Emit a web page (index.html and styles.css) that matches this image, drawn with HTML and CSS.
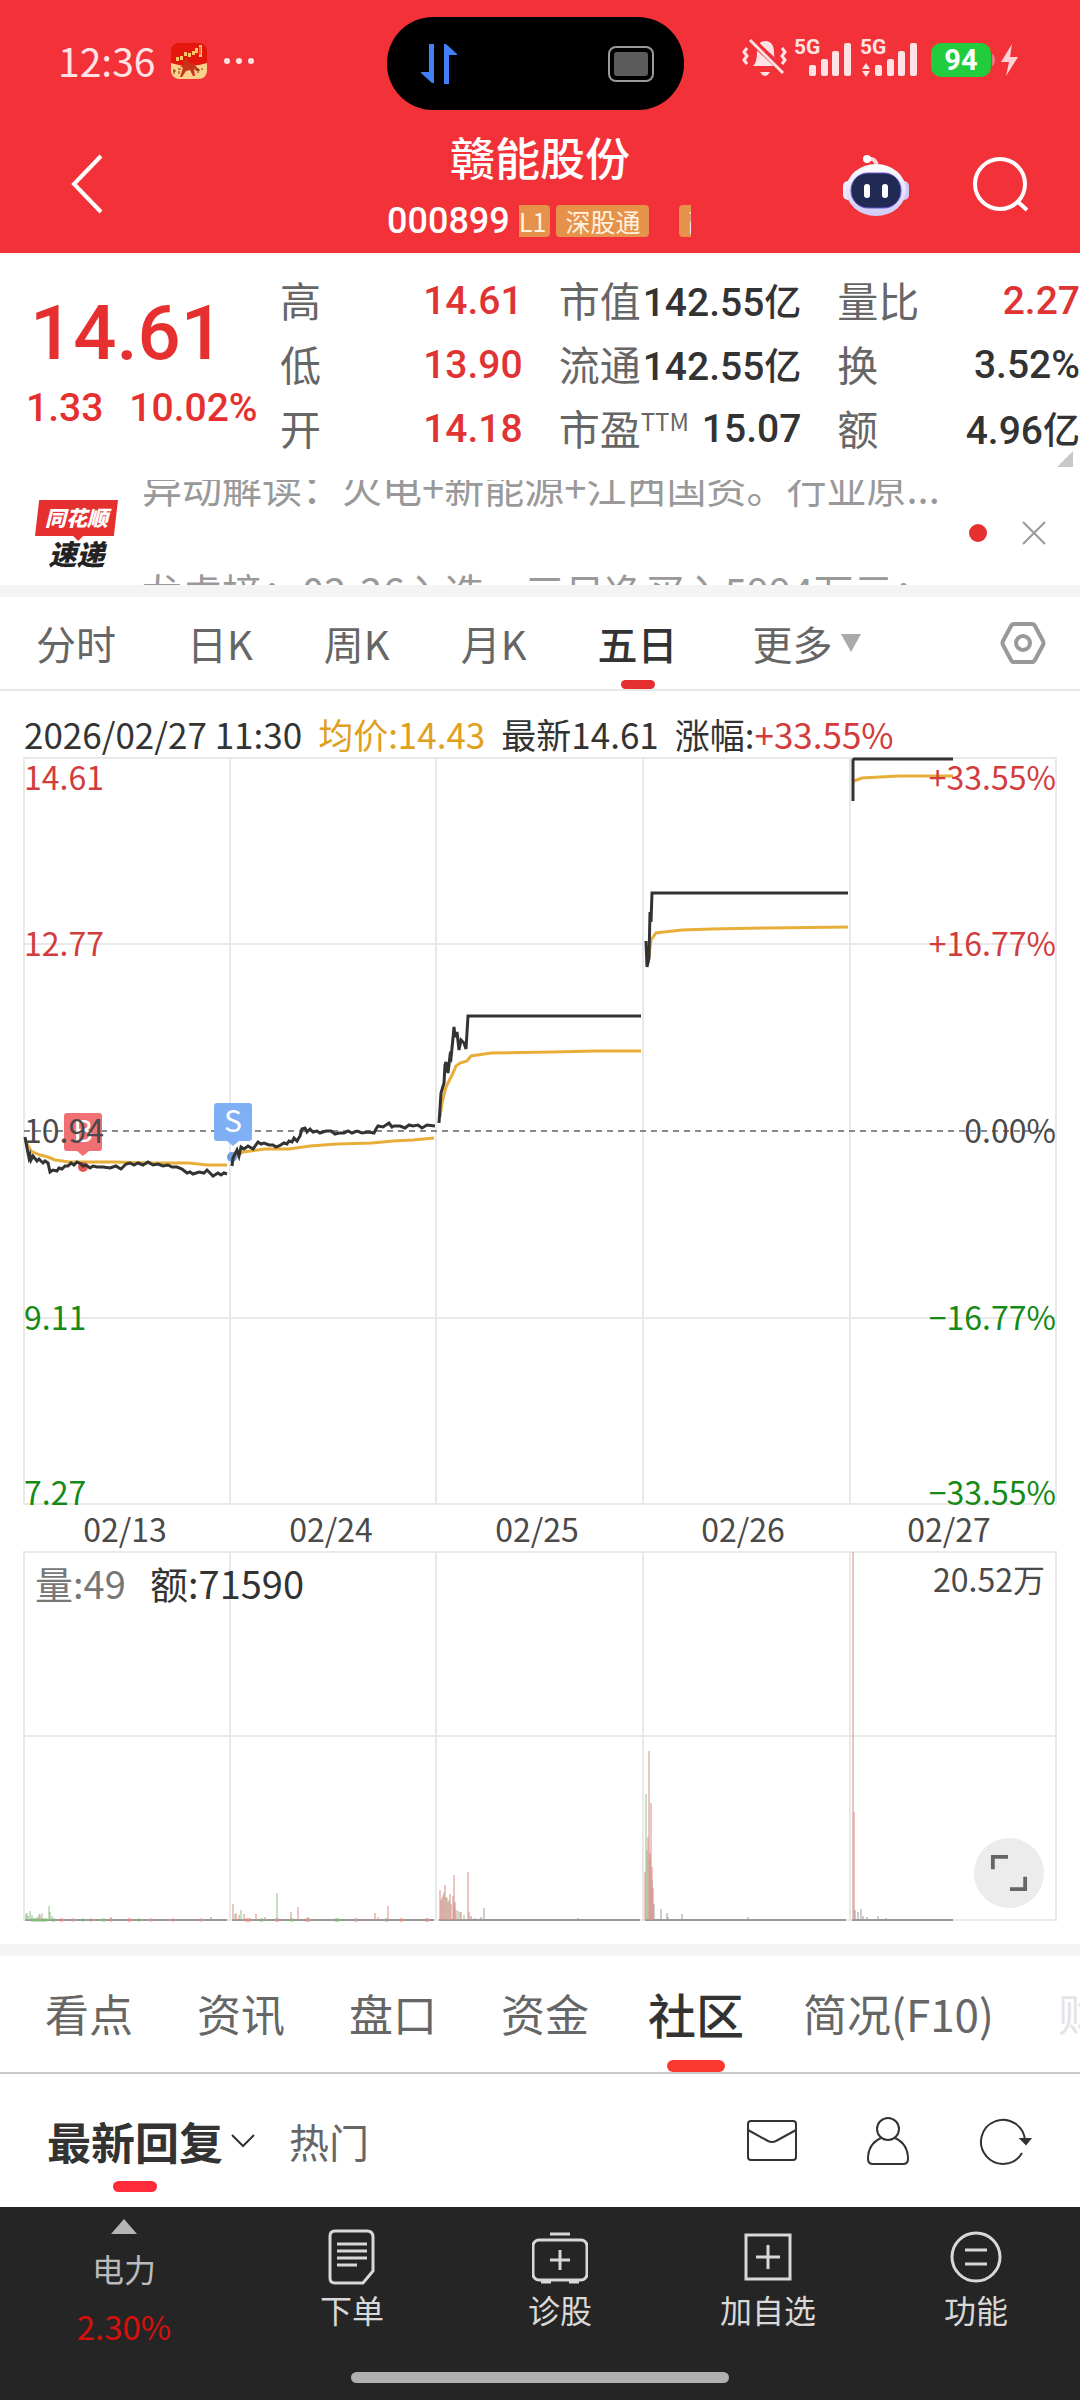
FILE: index.html
```html
<!DOCTYPE html>
<html lang="zh-CN">
<head>
<meta charset="utf-8">
<meta name="viewport" content="width=device-width, initial-scale=1">
<title>赣能股份 000899</title>
<link rel="stylesheet" href="styles.css">
</head>
<body>
<header class="top">
  <div class="status">
    <div class="status-left">
      <span class="clock">12:36</span>
      <svg class="app-icon" viewBox="0 0 36 36" aria-hidden="true">
        <defs><clipPath id="app-clip"><rect width="36" height="36" rx="8"/></clipPath></defs>
        <g clip-path="url(#app-clip)">
          <rect width="36" height="36" fill="#e3170d"/>
          <path d="M0 20Q18 26 36 20V36H0Z" fill="#fbd08a"/>
          <path d="M5 14h3v4H5zM9 13h3v4H9zM13 9h3v4h-3zM17 10h3v4h-3zM21 8h3v4h-3zM24 5h3v5h-3zM28 2h3v12h-3z" fill="#f9c65f"/>
          <path d="M29 4v8" stroke="#e3170d"/>
          <path d="M13 17l3-2 2 5 6 2 4 5-2 1-3-2 1 7h-2l-3-6-4 1-4 6h-2l3-9-3-2 3-1z" fill="#c8331c"/>
          <path d="M2 28h3m-2-2v5m4-5h3m-2 2v3m17-4h4m-2-2v5m3-4h2" stroke="#8a3415" fill="none"/>
        </g>
      </svg>
      <svg class="more-dots" viewBox="0 0 32 8" aria-hidden="true"><g fill="#ffe3e4"><circle cx="4" cy="4" r="3"/><circle cx="16" cy="4" r="3"/><circle cx="28" cy="4" r="3"/></g></svg>
    </div>
    <div class="island">
      <svg class="island-arrows" viewBox="0 0 36 40" aria-hidden="true"><path d="M8 0h5v39h-2L0 29v-1h8zM23 40h5V11h8v-1L25 0h-2z" fill="#4080f8"/></svg>
      <svg class="island-box" viewBox="0 0 46 36" aria-hidden="true"><rect x="1" y="1" width="44" height="34" rx="7" fill="none" stroke="#9a9a9a" stroke-width="2"/><rect x="6" y="6" width="34" height="24" rx="3" fill="#5c5c5c"/></svg>
    </div>
    <svg class="status-right" viewBox="740 34 280 50" role="img" aria-label="静音 5G 5G 电量94">
      <g fill="#ffe3e4">
        <path d="M753 66q4-4 4-13 0-12 8-12 9 0 9 12 0 9 5 13zM760 72h10q-5 8-10 0z"/>
        <path d="M749 38l36 34" stroke="#f03038" stroke-width="7"/>
        <path d="M750 40l33 33" stroke="#ffe3e4" stroke-width="3"/>
        <path d="M747 48l-3 4 3 4-3 4 3 4M782 48l3 4-3 4 3 4-3 4" fill="none" stroke="#ffe3e4" stroke-width="3"/>
        <rect x="809" y="65" width="7" height="11" rx="2"/><rect x="821" y="59" width="7" height="17" rx="2"/><rect x="832" y="51" width="7" height="25" rx="2"/><rect x="844" y="43" width="7" height="33" rx="2"/>
        <rect x="875" y="65" width="7" height="11" rx="2"/><rect x="887" y="59" width="7" height="17" rx="2"/><rect x="898" y="51" width="7" height="25" rx="2"/><rect x="910" y="43" width="7" height="33" rx="2"/>
        <path d="M862 69l4-6 4 6zM862 71l4 6 4-6z"/>
        <text x="794" y="54" class="net">5G</text><text x="860" y="54" class="net">5G</text>
      </g>
      <rect x="931" y="43" width="60" height="34" rx="10" fill="#21cd3c"/>
      <path d="M992 54q3 1 3 6t-3 6z" fill="#e8787c"/>
      <text x="961" y="70" class="battery">94</text>
      <path d="M1012 44l-11 18h8l-3 14 12-19h-8z" fill="#ffd3d5"/>
    </svg>
  </div>
  <div class="nav">
    <div class="nav-side">
      <button class="icon-btn back" aria-label="返回"><svg viewBox="0 0 34 60"><path d="M31 2L4 30l27 28" fill="none" stroke="#fff" stroke-width="4"/></svg></button>
    </div>
    <div class="nav-title">
      <h1>赣能股份</h1>
      <div class="code-line"><span class="code">000899</span><div class="badges"><span class="badge badge-cut">L1</span><span class="badge">深股通</span><span class="badge badge-next">融</span></div></div>
    </div>
    <div class="nav-side nav-actions">
      <button class="icon-btn robot" aria-label="智能助手">
        <svg viewBox="0 0 68 64">
          <defs><linearGradient id="shell" x1="0" y1="0" x2="0" y2="1"><stop offset="0" stop-color="#fff"/><stop offset="1" stop-color="#cfc9f5"/></linearGradient></defs>
          <path d="M25 5q9-2 10 8" fill="none" stroke="#fbd6dc" stroke-width="4"/><circle cx="25" cy="5" r="4" fill="#fff"/>
          <rect x="1" y="27" width="10" height="19" rx="5" fill="#eeeafd"/><rect x="57" y="27" width="10" height="19" rx="5" fill="#cfc9f5"/>
          <ellipse cx="34" cy="36" rx="30" ry="26" fill="url(#shell)"/>
          <rect x="9" y="19" width="50" height="35" rx="17" fill="#202a52" stroke="#6a55d8" stroke-width="1"/>
          <rect x="22" y="30" width="6" height="14" rx="3" fill="#fff"/><rect x="40" y="30" width="6" height="14" rx="3" fill="#fff"/>
        </svg>
      </button>
      <button class="icon-btn search" aria-label="搜索"><svg viewBox="0 0 58 58"><circle cx="28" cy="28" r="25" fill="none" stroke="#fff" stroke-width="4"/><path d="M45 45l10 9" stroke="#fff" stroke-width="4"/></svg></button>
    </div>
  </div>
</header>

<main>
  <section class="quote">
    <div class="price">
      <strong class="last">14.61</strong>
      <div class="change"><span>1.33</span><span>10.02%</span></div>
    </div>
    <dl class="facts">
      <div><dt>高</dt><dd class="up">14.61</dd></div>
      <div><dt>市值</dt><dd>142.55<i>亿</i></dd></div>
      <div><dt>量比</dt><dd class="up">2.27</dd></div>
      <div><dt>低</dt><dd class="up">13.90</dd></div>
      <div><dt>流通</dt><dd>142.55<i>亿</i></dd></div>
      <div><dt>换</dt><dd>3.52%</dd></div>
      <div><dt>开</dt><dd class="up">14.18</dd></div>
      <div><dt>市盈<sup>TTM</sup></dt><dd>15.07</dd></div>
      <div><dt>额</dt><dd>4.96<i>亿</i></dd></div>
    </dl>
    <svg class="corner" viewBox="0 0 16 16" aria-hidden="true"><path d="M16 0v16H0z" fill="#c8c8c8"/></svg>
  </section>

  <section class="news">
    <div class="news-logo"><span class="logo-top">同花顺</span><span class="logo-bottom">速递</span></div>
    <div class="news-lines"><a href="#n1">异动解读：火电+新能源+江西国资。行业原...</a><a href="#n2">龙虎榜：02-26入选，三日净买入5994万元；</a></div>
    <span class="news-dot"></span>
    <button class="icon-btn close" aria-label="关闭"><svg viewBox="0 0 24 24"><path d="M1 1l22 22M23 1L1 23" stroke="#999" stroke-width="2"/></svg></button>
  </section>

  <nav class="periods">
    <a href="#t">分时</a><a href="#d">日K</a><a href="#w">周K</a><a href="#m">月K</a><a href="#5" class="active">五日</a>
    <a href="#more" class="more">更多<svg viewBox="0 0 20 18" aria-hidden="true"><path d="M0 0h20L10 18z" fill="#aaa"/></svg></a>
    <button class="icon-btn gear" aria-label="设置"><svg viewBox="0 0 46 44"><path d="M14 3h18q2 0 3 2l8 15q1 2 0 4l-8 15q-1 2-3 2H14q-2 0-3-2L3 24q-1-2 0-4l8-15q1-2 3-2z" fill="none" stroke="#999" stroke-width="4"/><circle cx="23" cy="22" r="7" fill="none" stroke="#999" stroke-width="4"/></svg></button>
  </nav>

  <section class="chart">
    <p class="readout"><span>2026/02/27 11:30</span><span class="avg">均价:14.43</span><span>最新14.61</span><span>涨幅:<b>+33.55%</b></span></p>
    <svg class="plot" viewBox="0 756 1080 750" role="img" aria-label="五日分时走势">
      <path class="grid" d="M24 758H1056V1504H24ZM24 944H1056M24 1318H1056M230 758V1504M436 758V1504M643 758V1504M850 758V1504"/>
      <path d="M24 1131H1056" stroke="#888" stroke-width="2" stroke-dasharray="6 5"/>
      <g class="avg-line">
        <path d="M25 1140L31 1151 40 1155 48 1157 55 1160 69 1162 114 1162 150 1163 189 1163 207 1165 227 1165"/>
        <path d="M233 1160L238 1155 243 1152 265 1149 289 1149 310 1146 337 1144 372 1143 393 1141 413 1140 434 1138"/>
        <path d="M440 1117L442 1103 446 1087 453 1073 456 1066 460 1063 467 1061 471 1056 491 1053 552 1052 595 1051 641 1051"/>
        <path d="M648 963L651 940 656 933 664 932 682 930 712 929 769 928 848 927"/>
        <path d="M854 781L862 778 880 777 899 776 953 776"/>
      </g>
      <circle cx="83" cy="1167" r="5" fill="#e45656"/><circle cx="232" cy="1157" r="5" fill="#6f9fe0"/>
      <g class="price-line">
        <path d="M25 1137L27 1148 29 1158 30 1155 31 1160 33 1156 37 1161 39 1159 43 1163 45 1161 48 1163 50 1172 53 1170 57 1171 59 1168 62 1169 65 1166 68 1166 71 1163 74 1165 77 1162 81 1164 83 1166 86 1165 90 1168 93 1166 97 1167 103 1167 110 1168 116 1166 119 1168 121 1169 126 1164 130 1163 134 1165 138 1163 143 1165 148 1162 153 1165 158 1164 163 1166 168 1165 172 1167 177 1167 182 1169 187 1173 190 1172 193 1174 199 1172 204 1173 207 1170 211 1174 213 1176 218 1173 221 1175 224 1173 227 1174"/>
        <path d="M232 1166L233 1158 237 1150 239 1156 241 1147 244 1149 248 1146 253 1149 258 1142 261 1144 264 1143 269 1145 273 1145 276 1147 279 1146 284 1143 287 1144 289 1141 292 1142 294 1138 297 1141 300 1136 302 1129 305 1128 307 1132 310 1129 313 1132 317 1131 320 1133 326 1131 331 1131 335 1134 339 1133 344 1133 348 1131 352 1133 357 1131 362 1133 368 1132 374 1133 376 1129 378 1126 383 1127 389 1123 392 1127 394 1126 400 1126 405 1128 409 1125 413 1126 418 1125 422 1128 427 1125 435 1126"/>
        <path d="M439 1123L441 1093 444 1083 445 1065 446 1062 448 1073 450 1056 451 1058 453 1038 454 1027 455 1037 457 1032 459 1050 461 1040 464 1043 466 1049 468 1016 641 1016"/>
        <path d="M646 941L647 967 649 958 650 912 651 922 652 893 848 893"/>
        <path d="M853 801V760L854 759 953 759"/>
      </g>
      <path d="M67 1113H99q3 0 3 3V1148q0 3-3 3H89L83 1156 77 1151H67q-3 0-3-3V1116q0-3 3-3z" fill="#f07074"/>
      <path d="M217 1103H249q3 0 3 3V1138q0 3-3 3H239L233 1146 227 1141H217q-3 0-3-3V1106q0-3 3-3z" fill="#7fb0f5"/>
      <text x="83" y="1142" class="mark">B</text><text x="233" y="1132" class="mark">S</text>
      <g class="axis">
        <text x="24" y="790" class="up">14.61</text><text x="24" y="956" class="up">12.77</text><text x="24" y="1143">10.94</text><text x="24" y="1330" class="down">9.11</text><text x="24" y="1505" class="down">7.27</text>
        <g text-anchor="end"><text x="1056" y="790" class="up">+33.55%</text><text x="1056" y="956" class="up">+16.77%</text><text x="1056" y="1143">0.00%</text><text x="1056" y="1330" class="down">−16.77%</text><text x="1056" y="1505" class="down">−33.55%</text></g>
      </g>
    </svg>
    <div class="dates"><span>02/13</span><span>02/24</span><span>02/25</span><span>02/26</span><span>02/27</span></div>
    <div class="volume">
      <svg class="plot" viewBox="0 1550 1080 394" role="img" aria-label="成交量">
        <path class="grid" d="M24 1552H1056V1920H24ZM24 1736H1056M230 1552V1920M436 1552V1920M643 1552V1920M850 1552V1920"/>
        <path d="M25 1920H227M232 1920H434M439 1920H640M645 1920H846M852 1920H953" stroke="#999" stroke-width="2"/>
        <path d="M60 1920h3M72 1920h2M90 1920h2M110 1920h2M128 1920h3M150 1920h2M172 1920h2M200 1920h2M245 1920h6M275 1920h4M305 1920h5M355 1920h3M400 1920h3M425 1920h4" stroke="#dd8c86" stroke-width="3"/>
        <path d="M31 1920h16M52 1920h3M82 1920h2M102 1920h3M138 1920h2M260 1920h3M290 1920h3M335 1920h4M385 1920h3" stroke="#86b87e" stroke-width="3"/>
        <path d="M26 1920V1914M27 1920V1913M28 1920V1916M30 1920V1911M32 1920V1915M37 1920V1917M39 1920V1914M42 1920V1913M49 1920V1906M50 1920V1912M52 1920V1916M235 1920V1914M241 1920V1910M277 1920V1893M444 1920V1892M447 1920V1898M449 1920V1900M454 1920V1905M458 1920V1911M461 1920V1912M464 1920V1915M646 1920V1794M647 1920V1850M650 1920V1858M652 1920V1880" class="vd"/>
        <path d="M40 1920V1915M111 1920V1917M233 1920V1904M236 1920V1913M239 1920V1915M244 1920V1914M256 1920V1914M265 1920V1917M291 1920V1912M298 1920V1907M308 1920V1917M375 1920V1913M388 1920V1906M378 1920V1917M440 1920V1890M441 1920V1900M442 1920V1898M443 1920V1895M445 1920V1885M446 1920V1897M448 1920V1902M450 1920V1894M451 1920V1904M453 1920V1896M454 1920V1875M455 1920V1902M456 1920V1910M460 1920V1912M468 1920V1872M469 1920V1912M645 1920V1872M648 1920V1837M649 1920V1751M650 1920V1853M651 1920V1803M652 1920V1867M653 1920V1888M853 1920V1552M854 1920V1812" class="vu"/>
        <path d="M471 1920V1916M475 1920V1918M484 1920V1908M481 1920V1917M578 1920V1918M654 1920V1904M661 1920V1909M667 1920V1913M668 1920V1917M682 1920V1914M748 1920V1917M855 1920V1910M858 1920V1912M861 1920V1909M863 1920V1916M867 1920V1917M878 1920V1916M886 1920V1918M211 1920V1917" class="vg"/>
        <text x="35" y="1599" class="vol-text"><tspan fill="#777">量:49</tspan></text>
        <text x="150" y="1599" class="vol-text">额:71590</text>
        <text x="1045" y="1592" class="vol-max">20.52万</text>
      </svg>
      <button class="expand" aria-label="全屏"><svg viewBox="0 0 40 40"><path d="M3 16V3h16M37 24V37H21" fill="none" stroke="#666" stroke-width="4"/></svg></button>
    </div>
  </section>

  <nav class="sections">
    <a href="#s1">看点</a><a href="#s2">资讯</a><a href="#s3">盘口</a><a href="#s4">资金</a><a href="#s5" class="active">社区</a><a href="#s6">简况(F10)</a><a href="#s7" class="fading">财务</a>
  </nav>

  <section class="filters">
    <button class="filter active">最新回复</button>
    <svg class="chev" viewBox="0 0 24 14" aria-hidden="true"><path d="M1 1l11 11L23 1" fill="none" stroke="#333" stroke-width="2"/></svg>
    <button class="filter">热门</button>
    <div class="tools">
      <button class="icon-btn" aria-label="消息"><svg viewBox="0 0 50 50"><rect x="1" y="5" width="48" height="39" rx="3"/><path d="M1 14l20 11q4 2 8 0L49 14"/></svg></button>
      <button class="icon-btn" aria-label="我的"><svg viewBox="0 0 50 50"><circle cx="25" cy="13" r="11"/><path d="M18 22Q5 28 5 43q0 5 5 5H40q5 0 5-5 0-15-13-21"/></svg></button>
      <button class="icon-btn" aria-label="刷新"><svg viewBox="0 0 50 50"><path d="M43 37A22 22 0 1 1 46 25"/><path d="M42 23h9l-4 5z" fill="#333"/></svg></button>
    </div>
  </section>
</main>

<footer class="dock">
  <div class="dock-items">
    <button class="dock-item sector"><svg class="tri" viewBox="0 0 26 15" aria-hidden="true"><path d="M13 0l13 15H0z" fill="#b5b5b5"/></svg><span>电力</span><span class="pct">2.30%</span></button>
    <button class="dock-item"><svg viewBox="0 0 56 56"><path d="M11 2H43q6 0 6 6V42L39 54H11q-5 0-5-5V7q0-5 5-5z"/><path d="M13 15H43M13 22H43M13 29H43M13 36H33"/></svg><span>下单</span></button>
    <button class="dock-item"><svg viewBox="0 0 56 56"><rect x="1" y="11" width="54" height="40" rx="6"/><path d="M18 5H38M28 21V41M18 31H38M9 53H19M37 53H47"/></svg><span>诊股</span></button>
    <button class="dock-item"><svg viewBox="0 0 56 56"><rect x="6" y="6" width="44" height="44"/><path d="M28 16V40M16 28H40"/></svg><span>加自选</span></button>
    <button class="dock-item"><svg viewBox="0 0 56 56"><circle cx="28" cy="28" r="24"/><path d="M17 21H39M17 35H39"/></svg><span>功能</span></button>
  </div>
  <div class="home-bar"></div>
</footer>
</body>
</html>
```
FILE: styles.css
```css
* { box-sizing: border-box; }
body {
  margin: 0;
  background: #fff;
  color: #333;
  font-family: "Noto Sans CJK SC", sans-serif;
  overflow-x: hidden;
}
button { border: 0; padding: 0; background: none; font: inherit; color: inherit; }
a { color: inherit; text-decoration: none; }
svg { display: block; }
h1, p, dl, dd { margin: 0; }
.icon-btn { display: block; flex: none; }
.icon-btn svg { width: 100%; }
.up { color: #e03434; fill: #d23c3c; }
.down { fill: #168a16; }

/* header */
.top { background: #f23138; color: #fff; }
.status {
  display: grid;
  grid-template-columns: 1fr 297px 1fr;
  height: 110px;
  padding: 17px 10px 0 0;
}
.status-left { display: flex; align-items: center; height: 88px; padding-left: 58px; }
.clock { font-size: 39px; line-height: 48px; color: #ffe3e4; margin-top: -3px; }
.app-icon { width: 36px; margin-left: 16px; }
.more-dots { width: 32px; margin-left: 16px; }
.island {
  display: flex;
  align-items: center;
  justify-content: space-between;
  padding: 0 30px 0 34px;
  border-radius: 46px;
  background: #000;
}
.island-arrows { width: 36px; }
.island-box { width: 46px; }
.status-right { width: 280px; margin: 17px 0 0 56px; }
.net { font: 700 21px Roboto, sans-serif; }
.battery { font: 700 29px Roboto, sans-serif; fill: #fff; text-anchor: middle; }
.nav { display: grid; grid-template-columns: 1fr auto 1fr; height: 143px; padding-top: 16px; }
.nav-side { display: flex; align-items: flex-start; padding: 28px 0 0 70px; }
.nav-actions { justify-content: flex-end; padding: 28px 50px 0 0; gap: 62px; }
.back { width: 34px; }
.robot { width: 68px; }
.search { width: 58px; padding-top: 2px; }
.nav-title { width: 306px; text-align: center; }
.nav-title h1 { font-size: 45px; font-weight: 500; line-height: 62px; }
.code-line { display: flex; align-items: center; height: 66px; }
.code { flex: none; font: 500 36px/40px Roboto, sans-serif; width: 132px; text-align: left; }
.badges { display: flex; flex: none; gap: 6px; width: 172px; overflow: hidden; }
.badge {
  flex: none;
  padding: 0 9px;
  border-radius: 4px;
  background: #e6924a;
  color: #fff3e0;
  font-size: 25px;
  line-height: 32px;
}
.badge-cut { padding: 0 4px 0 0; border-radius: 0 4px 4px 0; }
.badge-next { margin-left: 24px; }

/* quote */
.quote { position: relative; display: flex; height: 227px; padding-top: 16px; }
.price { flex: none; width: 280px; padding: 12px 0 0 26px; color: #e63030; font-family: Roboto, sans-serif; }
.last { display: block; font-size: 76px; line-height: 104px; font-weight: 500; padding-left: 4px; }
.change { display: flex; gap: 26px; font-size: 39px; line-height: 46px; font-weight: 500; }
.facts { flex: 1; display: grid; grid-template-columns: 1fr 1fr 1fr; grid-auto-rows: 64px; column-gap: 36px; }
.facts div { display: flex; align-items: center; justify-content: space-between; min-width: 0; white-space: nowrap; }
.facts dt { font-size: 41px; line-height: 60px; padding-bottom: 4px; color: #666; }
.facts sup { font-size: 24px; line-height: 24px; vertical-align: 14px; }
.facts dd { font: 500 39px/64px Roboto, sans-serif; }
.facts i { font: 500 37px/64px "Noto Sans CJK SC", sans-serif; }
.corner { position: absolute; right: 7px; bottom: 13px; width: 16px; }

/* news ticker */
.news {
  display: flex;
  align-items: center;
  height: 117px;
  padding: 0 34px 0 35px;
  border-bottom: 12px solid #f4f4f4;
  overflow: hidden;
}
.news-logo { flex: none; width: 83px; text-align: center; font-style: italic; font-weight: 900; }
.logo-top {
  display: block;
  height: 41px;
  background: #e63030;
  clip-path: polygon(5% 0, 100% 0, 95% 88%, 58% 88%, 52% 100%, 46% 88%, 0 88%);
  color: #fff;
  font-size: 21px;
  line-height: 35px;
}
.logo-bottom { display: block; color: #222; font-size: 28px; line-height: 24px; }
.news-lines { flex: 1; align-self: flex-start; margin: -46px 0 0 24px; color: #999; font-size: 40px; white-space: nowrap; }
.news-lines a { display: block; line-height: 105px; }
.news-dot { flex: none; width: 18px; height: 18px; margin-right: 35px; border-radius: 50%; background: #e63030; }
.close { width: 24px; }

/* period tabs */
.periods {
  display: flex;
  align-items: stretch;
  gap: 71px;
  height: 94px;
  padding: 0 34px 0 36px;
  border-bottom: 2px solid #e8e8e8;
  color: #666;
  font-size: 40px;
  line-height: 92px;
}
.periods a, .sections a { position: relative; flex: none; white-space: nowrap; }
.periods .active { color: #333; font-weight: 500; }
.periods .active::after {
  content: "";
  position: absolute;
  left: calc(50% - 17px);
  bottom: 0;
  width: 34px;
  height: 9px;
  border-radius: 5px;
  background: #e63030;
}
.more { display: flex; align-items: center; gap: 8px; margin-left: 4px; }
.more svg { width: 20px; }
.gear { align-self: center; width: 46px; margin-left: auto; }

/* charts */
.readout { display: flex; gap: 16px; padding: 20px 24px 0; font-size: 35px; line-height: 45px; white-space: nowrap; }
.readout b { font-weight: 400; color: #d23c3c; }
.avg { color: #dfa020; }
.plot { width: 100%; }
.grid { fill: none; stroke: #e9e9e9; stroke-width: 2; }
.avg-line path { fill: none; stroke: #e8ae3a; stroke-width: 3; }
.price-line path { fill: none; stroke: #333; stroke-width: 3; }
.mark { font-size: 30px; fill: #fff; text-anchor: middle; }
.axis text { font-size: 32px; }
.axis text:not(.up):not(.down) { fill: #4a4a4a; }
.dates { display: grid; grid-template-columns: repeat(5, 1fr); padding: 0 28px 0 22px; text-align: center; font-size: 32px; line-height: 44px; color: #4a4a4a; }
.volume { position: relative; }
.vd { stroke: #8fbf87; stroke-width: 1; }
.vu { stroke: #d98c86; stroke-width: 1; }
.vg { stroke: #999; stroke-width: 1; }
.vol-text { font-size: 38px; fill: #333; }
.vol-max { font-size: 32px; fill: #4a4a4a; text-anchor: end; }
.expand {
  position: absolute;
  right: 36px;
  bottom: 36px;
  display: grid;
  place-items: center;
  width: 70px;
  height: 70px;
  border-radius: 50%;
  background: #ececec;
}
.expand svg { width: 38px; }

/* section tabs */
.sections {
  display: flex;
  gap: 64px;
  height: 130px;
  padding-left: 45px;
  border-top: 12px solid #f4f4f4;
  border-bottom: 2px solid #c8c8c8;
  overflow: hidden;
  color: #666;
  font-size: 44px;
  line-height: 114px;
}
.sections .active { margin: 0 -5px; color: #333; font-size: 48px; font-weight: 500; }
.sections .active::after {
  content: "";
  position: absolute;
  left: calc(50% - 29px);
  bottom: 0;
  width: 58px;
  height: 12px;
  border-radius: 6px;
  background: #fb3a2f;
}
.sections .fading { color: #e4e4e4; }

/* post filters */
.filters { display: flex; align-items: center; height: 133px; padding: 0 51px 0 47px; }
.filter { position: relative; height: 133px; font-size: 40px; line-height: 130px; color: #666; }
.filter.active { font-size: 44px; font-weight: 700; color: #333; }
.filter.active::after {
  content: "";
  position: absolute;
  left: calc(50% - 22px);
  bottom: 15px;
  width: 44px;
  height: 11px;
  border-radius: 6px;
  background: #ff2a3a;
}
.chev { width: 24px; margin: 0 34px 0 8px; }
.tools { display: flex; gap: 66px; margin-left: auto; }
.tools .icon-btn { width: 50px; }
.tools svg { fill: none; stroke: #333; stroke-width: 2; overflow: visible; }

/* bottom dock */
.dock { height: 194px; background: #252525; color: #d8d8d8; }
.dock-items { display: grid; grid-template-columns: 248fr 208fr 208fr 208fr 208fr; height: 165px; }
.dock-item { display: flex; flex-direction: column; align-items: center; padding-top: 22px; font-size: 32px; line-height: 44px; }
.dock-item svg { width: 56px; margin-bottom: 2px; fill: none; stroke: #d8d8d8; stroke-width: 3; }
.dock-item.sector { padding-top: 12px; color: #bbb; }
.dock-item .tri { width: 26px; margin-bottom: 12px; stroke: none; }
.pct { margin-top: 14px; font-size: 33px; color: #d8100c; }
.home-bar { width: 35%; height: 11px; margin: 0 auto; border-radius: 6px; background: #b0b0b0; }
```
